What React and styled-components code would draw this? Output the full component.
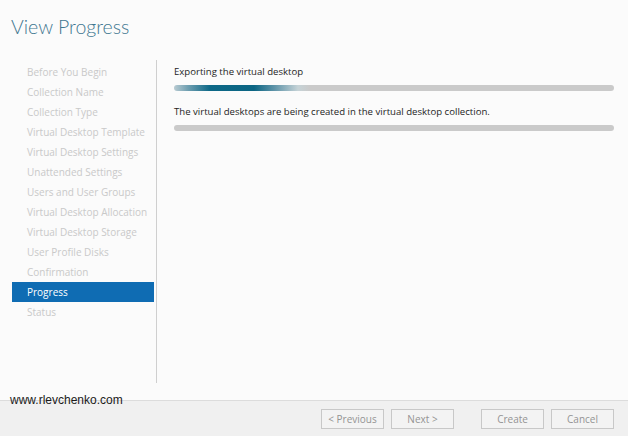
import styled, { createGlobalStyle } from 'styled-components';

const GlobalStyle = createGlobalStyle`
	html, body {
		margin: 0;
		padding: 0;
		background: #fbfbfb;
	}
	* {
		box-sizing: border-box;
	}
`;

const steps = [
	'Before You Begin',
	'Collection Name',
	'Collection Type',
	'Virtual Desktop Template',
	'Virtual Desktop Settings',
	'Unattended Settings',
	'Users and User Groups',
	'Virtual Desktop Allocation',
	'Virtual Desktop Storage',
	'User Profile Disks',
	'Confirmation',
	'Progress',
	'Status',
];

const tasks = [
	{ label: 'Exporting the virtual desktop', active: true },
	{ label: 'The virtual desktops are being created in the virtual desktop collection.', active: false },
];

const Wizard = styled.div`
	position: relative;
	width: 628px;
	height: 436px;
	display: flex;
	flex-direction: column;
	background: #fbfbfb;
	font-family: 'Open Sans', 'Noto Sans', sans-serif;
	overflow: hidden;
`;

const Title = styled.h1`
	margin: 0;
	height: 60px;
	padding: 15px 0 0 11px;
	font-family: Lato, 'Open Sans', sans-serif;
	font-size: 19.5px;
	font-weight: 300;
	color: #3f7790;
`;

const Body = styled.div`
	flex: 1;
	display: flex;
	padding-bottom: 17px;
`;

const Nav = styled.ul`
	list-style: none;
	margin: 0;
	padding: 2px 2px 0 12px;
	width: 157px;
	border-right: 1px solid #cfcfcf;
`;

const Step = styled.li`
	height: 20px;
	line-height: 20px;
	padding-left: 15px;
	font-size: 10px;
	color: ${(p) => (p.$current ? '#ffffff' : '#c9c9c9')};
	background: ${(p) => (p.$current ? '#0f6cb3' : 'transparent')};
	white-space: nowrap;
`;

const Content = styled.div`
	flex: 1;
	padding: 5px 14px 0 17px;
	display: flex;
	flex-direction: column;
`;

const Task = styled.div`
	display: flex;
	flex-direction: column;
	margin-bottom: 14px;
`;

const TaskLabel = styled.div`
	font-size: 9.6px;
	line-height: 14px;
	color: #1e1e1e;
	margin-bottom: 6px;
`;

const Bar = styled.div`
	height: 6px;
	border-radius: 3px;
	background: ${(p) =>
		p.$active
			? 'linear-gradient(90deg, #b9cbd2 0px, #6f9fb1 14px, #0d6887 36px, #0b6583 80px, #5d93a8 100px, #c6d3d7 124px, #cacaca 136px, #cacaca 100%)'
			: '#cacaca'};
`;

const Footer = styled.div`
	height: 36px;
	display: flex;
	align-items: flex-start;
	justify-content: flex-end;
	padding: 8px 14px 0 0;
	background: #f0f0f0;
	border-top: 1px solid #dcdcdc;
`;

const ButtonGroup = styled.div`
	display: flex;
	gap: 7px;
	margin-right: ${(p) => p.$spacing || 0}px;
`;

const Button = styled.button`
	width: 63px;
	height: 20px;
	padding: 0;
	border: 1px solid #c8c8c8;
	background: #f3f3f3;
	color: #939393;
	font-family: 'Open Sans', 'Noto Sans', sans-serif;
	font-size: 10px;
	cursor: default;
`;

const Watermark = styled.span`
	position: absolute;
	left: 10px;
	top: 393px;
	font-family: 'Liberation Sans', Arial, sans-serif;
	font-size: 12px;
	color: #1a1a1a;
`;

export default function App() {
	return (
		<>
			<GlobalStyle />
			<Wizard>
				<Title>View Progress</Title>
				<Body>
					<Nav>
						{steps.map((s) => (
							<Step key={s} $current={s === 'Progress'}>
								{s}
							</Step>
						))}
					</Nav>
					<Content>
						{tasks.map((t) => (
							<Task key={t.label}>
								<TaskLabel>{t.label}</TaskLabel>
								<Bar $active={t.active} />
							</Task>
						))}
					</Content>
				</Body>
				<Footer>
					<ButtonGroup $spacing={27}>
						<Button>&lt; Previous</Button>
						<Button>Next &gt;</Button>
					</ButtonGroup>
					<ButtonGroup>
						<Button>Create</Button>
						<Button>Cancel</Button>
					</ButtonGroup>
				</Footer>
				<Watermark>www.rlevchenko.com</Watermark>
			</Wizard>
		</>
	);
}
